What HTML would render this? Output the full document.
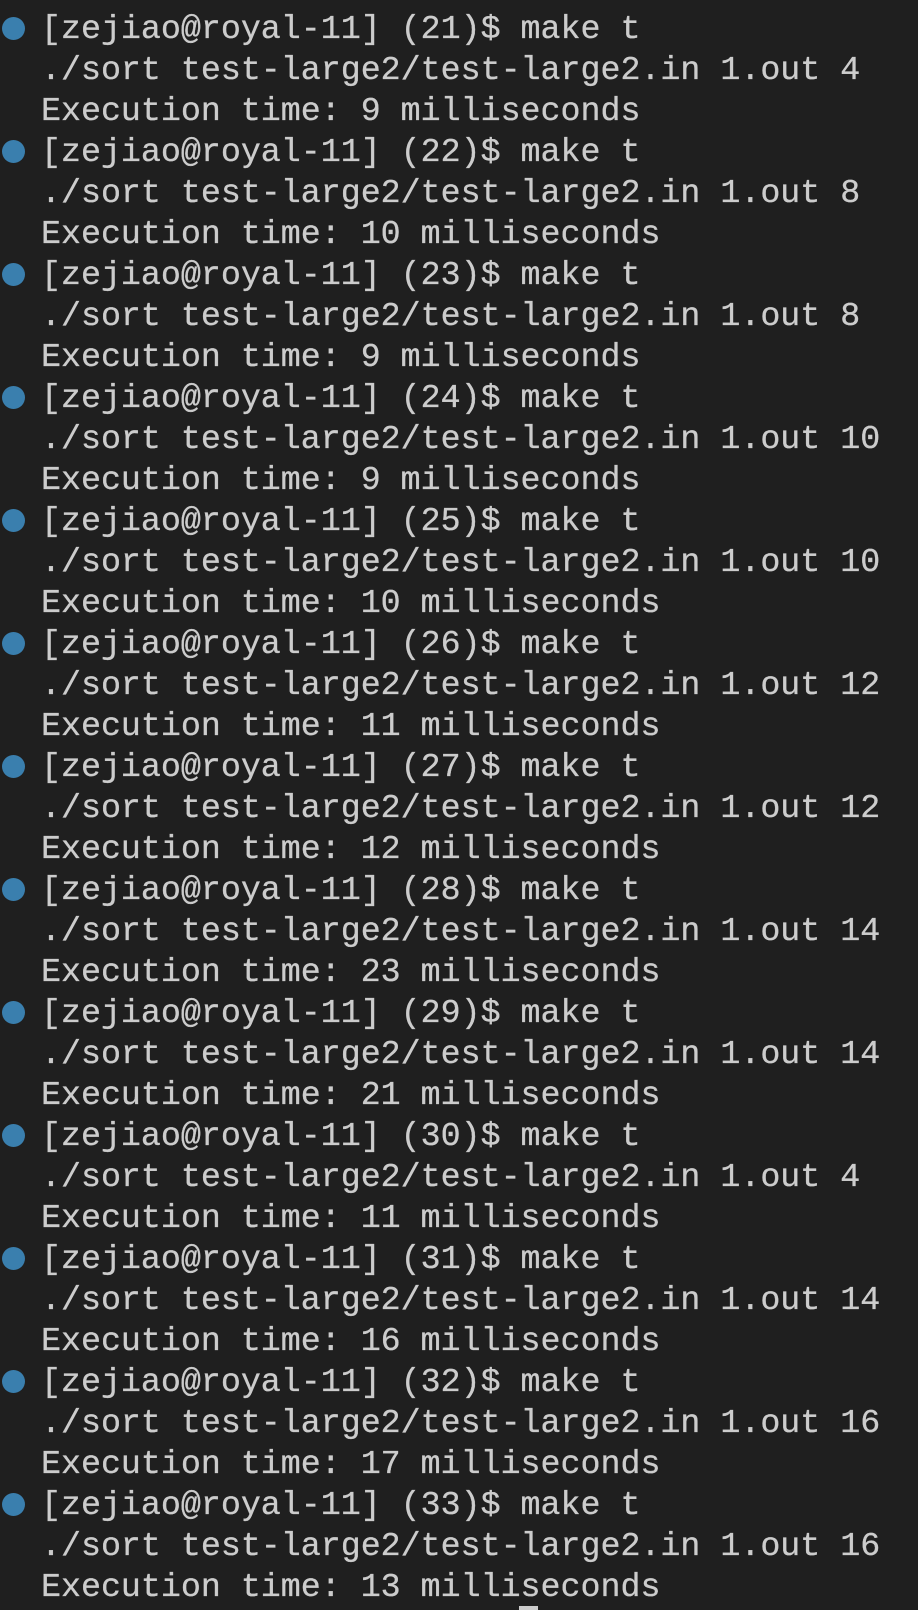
<!DOCTYPE html>
<html><head><meta charset="utf-8"><style>
html,body{margin:0;padding:0;background:#1f1f1f;width:918px;height:1610px;overflow:hidden}
#t{position:absolute;left:41px;top:-31.75px;font-family:"Liberation Mono","DejaVu Sans Mono",monospace;font-size:33.3px;line-height:41px;color:#cccccc;white-space:pre;margin:0;-webkit-text-stroke:0.3px #cccccc}
.d{position:absolute;left:2px;width:23px;height:23px;border-radius:50%;background:#3a7fae}
#cur{position:absolute;left:519px;top:1606px;width:19px;height:4px;background:#cccccc}
</style></head><body>
<pre id="t">Execution time: 9 milliseconds
[zejiao@royal-11] (21)$ make t
./sort test-large2/test-large2.in 1.out 4
Execution time: 9 milliseconds
[zejiao@royal-11] (22)$ make t
./sort test-large2/test-large2.in 1.out 8
Execution time: 10 milliseconds
[zejiao@royal-11] (23)$ make t
./sort test-large2/test-large2.in 1.out 8
Execution time: 9 milliseconds
[zejiao@royal-11] (24)$ make t
./sort test-large2/test-large2.in 1.out 10
Execution time: 9 milliseconds
[zejiao@royal-11] (25)$ make t
./sort test-large2/test-large2.in 1.out 10
Execution time: 10 milliseconds
[zejiao@royal-11] (26)$ make t
./sort test-large2/test-large2.in 1.out 12
Execution time: 11 milliseconds
[zejiao@royal-11] (27)$ make t
./sort test-large2/test-large2.in 1.out 12
Execution time: 12 milliseconds
[zejiao@royal-11] (28)$ make t
./sort test-large2/test-large2.in 1.out 14
Execution time: 23 milliseconds
[zejiao@royal-11] (29)$ make t
./sort test-large2/test-large2.in 1.out 14
Execution time: 21 milliseconds
[zejiao@royal-11] (30)$ make t
./sort test-large2/test-large2.in 1.out 4
Execution time: 11 milliseconds
[zejiao@royal-11] (31)$ make t
./sort test-large2/test-large2.in 1.out 14
Execution time: 16 milliseconds
[zejiao@royal-11] (32)$ make t
./sort test-large2/test-large2.in 1.out 16
Execution time: 17 milliseconds
[zejiao@royal-11] (33)$ make t
./sort test-large2/test-large2.in 1.out 16
Execution time: 13 milliseconds</pre>
<div class="d" style="top:17px"></div>
<div class="d" style="top:140px"></div>
<div class="d" style="top:263px"></div>
<div class="d" style="top:386px"></div>
<div class="d" style="top:509px"></div>
<div class="d" style="top:632px"></div>
<div class="d" style="top:755px"></div>
<div class="d" style="top:878px"></div>
<div class="d" style="top:1001px"></div>
<div class="d" style="top:1124px"></div>
<div class="d" style="top:1247px"></div>
<div class="d" style="top:1370px"></div>
<div class="d" style="top:1493px"></div>
<div id="cur"></div>
</body></html>
